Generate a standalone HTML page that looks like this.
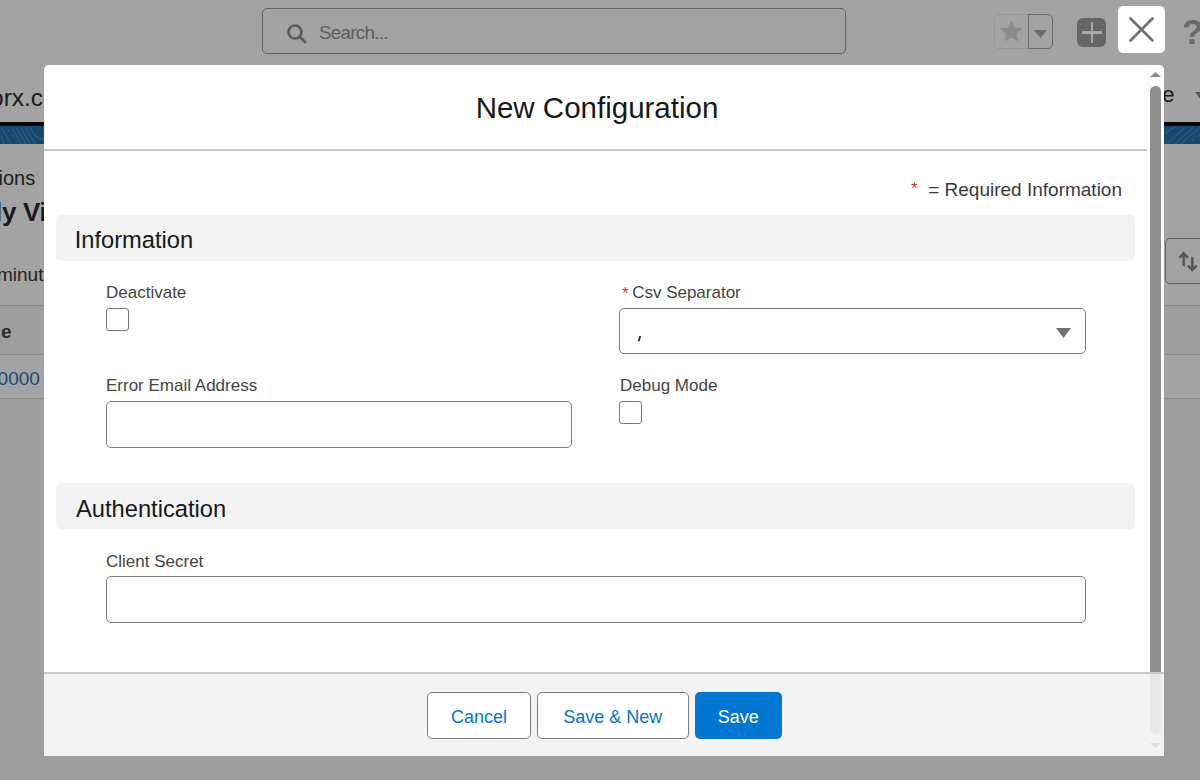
<!DOCTYPE html>
<html><head><meta charset="utf-8">
<style>
html,body{margin:0;padding:0;}
body{width:1200px;height:780px;overflow:hidden;position:relative;background:#a3a3a3;font-family:"Liberation Sans",sans-serif;}
.a{position:absolute;}
.t{position:absolute;white-space:nowrap;line-height:1;}
.box{position:absolute;box-sizing:border-box;}
</style></head><body>
<!-- background page (dimmed) -->
<div class="box" style="left:262px;top:8px;width:584px;height:46px;border:1.5px solid #646464;border-radius:5px;"></div>
<svg class="a" style="left:285px;top:22px" width="24" height="24" viewBox="0 0 24 24"><circle cx="10" cy="10" r="6.5" fill="none" stroke="#5a5a5a" stroke-width="2.6"/><line x1="14.8" y1="14.8" x2="20" y2="20" stroke="#5a5a5a" stroke-width="2.8" stroke-linecap="round"/></svg>
<div class="t" style="left:319px;top:23.5px;font-size:18.8px;letter-spacing:-0.7px;color:#5e5e5e;">Search...</div>

<!-- star group -->
<div class="box" style="left:994px;top:14px;width:35px;height:35px;border:1px solid #979797;border-right:none;border-radius:5px 0 0 5px;"></div>
<div class="box" style="left:1028px;top:14px;width:25px;height:35px;border:1.5px solid #6a6a6a;border-radius:0 5px 5px 0;"></div>
<svg class="a" style="left:999px;top:19px" width="25" height="25" viewBox="0 0 24 24"><path d="M12 1.5l3.1 7.1 7.6.6-5.8 5 1.8 7.5L12 17.7l-6.7 4 1.8-7.5-5.8-5 7.6-.6z" fill="#8b8b8b"/></svg>
<svg class="a" style="left:1034px;top:30px" width="13" height="8" viewBox="0 0 13 8"><path d="M0 0h13L6.5 8z" fill="#6a6a6a"/></svg>
<!-- plus -->
<div class="box" style="left:1077px;top:17.5px;width:29px;height:29px;background:#666;border-radius:6px;"></div>
<div class="a" style="left:1081.5px;top:31px;width:20px;height:2.5px;background:#a8a8a8"></div>
<div class="a" style="left:1090.5px;top:22px;width:2.5px;height:20.5px;background:#a8a8a8"></div>
<!-- close X -->
<div class="box" style="left:1117.5px;top:6px;width:47px;height:47px;background:#fff;border-radius:5px;"></div>
<svg class="a" style="left:1117.5px;top:6px" width="47" height="47" viewBox="0 0 47 47"><path d="M12.5 12.5L34.5 34.5M34.5 12.5L12.5 34.5" stroke="#707070" stroke-width="2.7" stroke-linecap="round"/></svg>
<div class="t" style="left:1182px;top:14px;font-size:35px;font-weight:700;color:#6b6b6b;">?</div>

<!-- left background -->
<div class="t" style="left:-10px;top:85.5px;font-size:24.5px;color:#1b1b1b;">orx.com</div>
<div class="a" style="left:0;top:122px;width:1200px;height:4px;background:#050505"></div>
<div class="a" style="left:0;top:126px;width:1200px;height:18px;background:#1a4770"></div>
<svg class="a" style="left:0;top:126px" width="44" height="18" viewBox="0 126 44 18"><g stroke="#325b7f" stroke-width="1.1" fill="none">
<path d="M1 135.5L4 143.8M1 127L11 143.8M7.5 129.5L9.5 131.5M11.5 127L21 143.8M16 127L26 143.8M20.5 127L30 143.8M25.5 127L35 143.8M12 135L14 137M16 141L17 143"/>
<path d="M30.5 127C33 135 37 139 44 139.5"/></g></svg>
<svg class="a" style="left:1164px;top:126px" width="36" height="18" viewBox="1164 126 36 18"><g stroke="#325b7f" stroke-width="1.1" fill="none">
<path d="M1165 134C1168 131 1171 128.5 1175.5 127.3M1167 143.8L1185 127.3M1175 143.8L1193 127.3M1181 143.8L1200 126.8M1191.5 140.8L1194 139M1197 136.7L1200 135"/></g></svg>
<div class="t" style="left:-7px;top:168px;font-size:20px;color:#1d1d1d;">tions</div>
<div class="t" style="left:-5px;top:199px;font-size:26px;font-weight:700;letter-spacing:-0.3px;color:#1a1a1a;">ly View</div>
<div class="t" style="left:-3px;top:265px;font-size:19px;color:#232323;">minutes</div>
<div class="a" style="left:0;top:305px;width:1200px;height:49px;background:#9e9e9e"></div>
<div class="a" style="left:0;top:305px;width:1200px;height:1px;background:#8a8a8a"></div>
<div class="a" style="left:0;top:354px;width:1200px;height:1px;background:#8a8a8a"></div>
<div class="a" style="left:0;top:398px;width:1200px;height:382px;background:#9e9e9e"></div>
<div class="a" style="left:0;top:398px;width:1200px;height:1px;background:#8a8a8a"></div>
<div class="t" style="left:1px;top:322px;font-size:19px;font-weight:700;color:#2b2b2b;">e</div>
<div class="t" style="left:-13px;top:369px;font-size:19px;color:#1a4a7a;">00000</div>
<div class="t" style="left:1155px;top:84px;font-size:22px;color:#1a1a1a;">re</div>
<svg class="a" style="left:1195px;top:92px" width="12" height="8" viewBox="0 0 12 8"><path d="M0 0h12L6 8z" fill="#555"/></svg>
<div class="box" style="left:1165px;top:237.5px;width:60px;height:46px;border:1.3px solid #5e5e5e;border-radius:5px;"></div>
<svg class="a" style="left:1164px;top:232px" width="36" height="58" viewBox="1164 232 36 58"><g stroke="#555" stroke-width="2.4" fill="none" stroke-linecap="butt" stroke-linejoin="miter">
<path d="M1183.7 253V266M1179.3 257.8L1183.7 253.2L1188.1 257.8M1192.3 257.3V270M1187.9 265.5L1192.3 270.1L1196.7 265.5"/></g></svg>

<!-- modal -->
<div class="a" style="left:44px;top:65px;width:1120px;height:691px;background:#fff;border-radius:5px 5px 0 0;overflow:hidden;"></div>
<div class="a" style="left:44px;top:149px;width:1103px;height:2px;background:#c9c9c9"></div>
<div class="t" style="left:0;width:1194px;text-align:center;top:93px;font-size:29.5px;color:#181818;">New Configuration</div>
<div class="t" style="right:78px;top:180px;font-size:19px;color:#3a3a3a;"><span style="color:#c23934;font-size:17px;position:relative;top:-2px">*</span>&nbsp; = Required Information</div>

<div class="box" style="left:56px;top:214.5px;width:1079px;height:46px;background:#f3f3f3;border-radius:5px;"></div>
<div class="t" style="left:74.7px;top:228.5px;font-size:23.7px;color:#181818;">Information</div>

<div class="t" style="left:106px;top:284px;font-size:17px;color:#444;">Deactivate</div>
<div class="box" style="left:106px;top:307.5px;width:23px;height:23px;border:1.3px solid #777;border-radius:3px;background:#fff"></div>

<div class="t" style="left:622px;top:284px;font-size:17px;color:#444;"><span style="color:#c23934;position:relative;top:1px">*</span><span style="margin-left:3.5px">Csv Separator</span></div>
<div class="box" style="left:619px;top:307.5px;width:466.5px;height:46.5px;border:1.5px solid #7d7d7d;border-radius:5px;background:#fff"></div>
<svg class="a" style="left:635px;top:333px" width="10" height="10" viewBox="635 333 10 10"><path d="M639.3 336H641.2L639.6 341.2H637.7Z" fill="#2a2a2a"/></svg>
<svg class="a" style="left:1056px;top:328px" width="15" height="10" viewBox="0 0 15 10"><path d="M0 0h15L7.5 10z" fill="#747474"/></svg>

<div class="t" style="left:106px;top:377px;font-size:17px;color:#444;">Error Email Address</div>
<div class="box" style="left:106px;top:401px;width:466px;height:46.5px;border:1.5px solid #7d7d7d;border-radius:5px;background:#fff"></div>

<div class="t" style="left:620px;top:377px;font-size:17px;color:#444;">Debug Mode</div>
<div class="box" style="left:619px;top:401px;width:23px;height:23px;border:1.3px solid #777;border-radius:3px;background:#fff"></div>

<div class="box" style="left:56px;top:483px;width:1079px;height:46px;background:#f3f3f3;border-radius:5px;"></div>
<div class="t" style="left:76px;top:497.5px;font-size:23.7px;color:#181818;">Authentication</div>

<div class="t" style="left:106px;top:552.5px;font-size:17px;color:#444;">Client Secret</div>
<div class="box" style="left:106px;top:576px;width:979.5px;height:46.5px;border:1.5px solid #7d7d7d;border-radius:5px;background:#fff"></div>

<!-- scrollbar -->
<div class="a" style="left:1147px;top:65px;width:17px;height:607px;background:#fcfcfc;border-top-right-radius:5px"></div>
<svg class="a" style="left:1150px;top:72px" width="11" height="5" viewBox="0 0 11 5"><path d="M0 5h11L5.5 0z" fill="#8e8e8e"/></svg>
<div class="a" style="left:1150px;top:86px;width:11px;height:648px;background:#8f8f8f;border-radius:5.5px;"></div>

<!-- footer -->
<div class="a" style="left:44px;top:672px;width:1120px;height:84px;background:#f3f3f3;"></div>
<div class="a" style="left:44px;top:672px;width:1120px;height:2px;background:#c9c9c9"></div>
<div class="a" style="left:1150px;top:674px;width:11px;height:60px;background:#e8e8e8;border-radius:0 0 5.5px 5.5px;"></div>
<svg class="a" style="left:1150px;top:743px" width="11" height="5" viewBox="0 0 11 5"><path d="M0 0h11L5.5 5z" fill="#e0e0e0"/></svg>

<div class="box" style="left:427px;top:692px;width:104px;height:46.5px;border:1.5px solid #7d7d7d;border-radius:5px;background:#fff"></div>
<div class="t" style="left:427px;width:104px;text-align:center;top:708px;font-size:18px;color:#0176d3;">Cancel</div>
<div class="box" style="left:537px;top:692px;width:151.5px;height:46.5px;border:1.5px solid #7d7d7d;border-radius:5px;background:#fff"></div>
<div class="t" style="left:537px;width:151.5px;text-align:center;top:708px;font-size:18px;color:#0176d3;">Save &amp; New</div>
<div class="box" style="left:694.5px;top:692px;width:87.5px;height:46.5px;border-radius:5px;background:#0176d3"></div>
<div class="t" style="left:694.5px;width:87.5px;text-align:center;top:708px;font-size:18px;color:#fff;">Save</div>
</body></html>
